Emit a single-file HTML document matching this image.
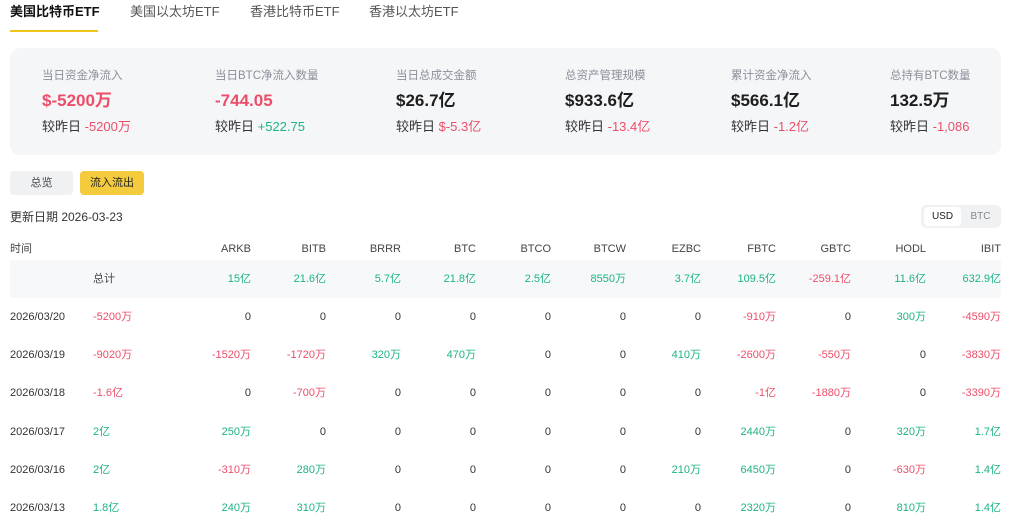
<!DOCTYPE html>
<html><head><meta charset="utf-8"><style>
*{margin:0;padding:0;box-sizing:border-box}
body{width:1015px;height:524px;overflow:hidden;background:#fff;font-family:"Liberation Sans","Noto Sans CJK SC",sans-serif;color:#222;position:relative}
.a{position:absolute;white-space:nowrap}
.tab{top:3px;font-size:13px;line-height:18px;color:#555}
.card{left:10px;top:48px;width:991px;height:107px;background:#f5f6f8;border-radius:10px}
.lab{top:68px;font-size:11.5px;line-height:16px;color:#8a8f98}
.val{top:90px;font-size:17px;line-height:22px;font-weight:bold;color:#1e1e1e}
.sub{top:117px;font-size:13px;line-height:20px;color:#333}
.r{color:#ec4e6a}.g{color:#1db386}
.row{position:absolute;left:10px;width:991px;display:flex;align-items:center;font-size:11px;line-height:16px;color:#333}
.row div{width:75px;text-align:right}
.row .d{width:83px;text-align:left}
.row .t{width:83px;text-align:left}
</style></head><body>
<div class="a tab" style="left:10px;color:#111;font-weight:bold">美国比特币ETF</div>
<div class="a" style="left:10px;top:30px;width:88px;height:2px;background:#f0c419"></div>
<div class="a tab" style="left:130px">美国以太坊ETF</div>
<div class="a tab" style="left:250px">香港比特币ETF</div>
<div class="a tab" style="left:369px">香港以太坊ETF</div>
<div class="a card"></div>
<div class="a lab" style="left:42px">当日资金净流入</div>
<div class="a val r" style="left:42px">$-5200万</div>
<div class="a sub" style="left:42px">较昨日 <span class="r">-5200万</span></div>
<div class="a lab" style="left:215px">当日BTC净流入数量</div>
<div class="a val r" style="left:215px">-744.05</div>
<div class="a sub" style="left:215px">较昨日 <span class="g">+522.75</span></div>
<div class="a lab" style="left:396px">当日总成交金额</div>
<div class="a val" style="left:396px">$26.7亿</div>
<div class="a sub" style="left:396px">较昨日 <span class="r">$-5.3亿</span></div>
<div class="a lab" style="left:565px">总资产管理规模</div>
<div class="a val" style="left:565px">$933.6亿</div>
<div class="a sub" style="left:565px">较昨日 <span class="r">-13.4亿</span></div>
<div class="a lab" style="left:731px">累计资金净流入</div>
<div class="a val" style="left:731px">$566.1亿</div>
<div class="a sub" style="left:731px">较昨日 <span class="r">-1.2亿</span></div>
<div class="a lab" style="left:890px">总持有BTC数量</div>
<div class="a val" style="left:890px">132.5万</div>
<div class="a sub" style="left:890px">较昨日 <span class="r">-1,086</span></div>

<div class="a" style="left:10px;top:171px;width:63px;height:24px;background:#f0f1f3;border-radius:4px;font-size:11px;line-height:24px;text-align:center;color:#444">总览</div>
<div class="a" style="left:80px;top:171px;width:64px;height:24px;background:#f4cb3c;border-radius:4px;font-size:11px;line-height:24px;text-align:center;color:#222">流入流出</div>
<div class="a" style="left:10px;top:208px;font-size:12px;line-height:18px;color:#333">更新日期 2026-03-23</div>
<div class="a" style="left:921px;top:205px;width:80px;height:23px;background:#f0f1f3;border-radius:5px"></div>
<div class="a" style="left:924px;top:207px;width:37px;height:19px;background:#fff;border-radius:4px;font-size:10px;line-height:19px;text-align:center;color:#222">USD</div>
<div class="a" style="left:962px;top:207px;width:37px;height:19px;font-size:10px;line-height:19px;text-align:center;color:#888">BTC</div>

<div class="row" style="top:241px;height:16px;color:#444"><div class="d">时间</div><div class="t"></div><div>ARKB</div><div>BITB</div><div>BRRR</div><div>BTC</div><div>BTCO</div><div>BTCW</div><div>EZBC</div><div>FBTC</div><div>GBTC</div><div>HODL</div><div>IBIT</div></div>
<div class="row" style="top:260px;height:38px;background:#f7f8fa"><div class="d"></div><div class="t" style="color:#444">总计</div><div class="g">15亿</div><div class="g">21.6亿</div><div class="g">5.7亿</div><div class="g">21.8亿</div><div class="g">2.5亿</div><div class="g">8550万</div><div class="g">3.7亿</div><div class="g">109.5亿</div><div class="r">-259.1亿</div><div class="g">11.6亿</div><div class="g">632.9亿</div></div>
<div class="row" style="top:307px;height:20px"><div class="d">2026/03/20</div><div class="t r">-5200万</div><div>0</div><div>0</div><div>0</div><div>0</div><div>0</div><div>0</div><div>0</div><div class="r">-910万</div><div>0</div><div class="g">300万</div><div class="r">-4590万</div></div>
<div class="row" style="top:345px;height:20px"><div class="d">2026/03/19</div><div class="t r">-9020万</div><div class="r">-1520万</div><div class="r">-1720万</div><div class="g">320万</div><div class="g">470万</div><div>0</div><div>0</div><div class="g">410万</div><div class="r">-2600万</div><div class="r">-550万</div><div>0</div><div class="r">-3830万</div></div>
<div class="row" style="top:383px;height:20px"><div class="d">2026/03/18</div><div class="t r">-1.6亿</div><div>0</div><div class="r">-700万</div><div>0</div><div>0</div><div>0</div><div>0</div><div>0</div><div class="r">-1亿</div><div class="r">-1880万</div><div>0</div><div class="r">-3390万</div></div>
<div class="row" style="top:422px;height:20px"><div class="d">2026/03/17</div><div class="t g">2亿</div><div class="g">250万</div><div>0</div><div>0</div><div>0</div><div>0</div><div>0</div><div>0</div><div class="g">2440万</div><div>0</div><div class="g">320万</div><div class="g">1.7亿</div></div>
<div class="row" style="top:460px;height:20px"><div class="d">2026/03/16</div><div class="t g">2亿</div><div class="r">-310万</div><div class="g">280万</div><div>0</div><div>0</div><div>0</div><div>0</div><div class="g">210万</div><div class="g">6450万</div><div>0</div><div class="r">-630万</div><div class="g">1.4亿</div></div>
<div class="row" style="top:498px;height:20px"><div class="d">2026/03/13</div><div class="t g">1.8亿</div><div class="g">240万</div><div class="g">310万</div><div>0</div><div>0</div><div>0</div><div>0</div><div>0</div><div class="g">2320万</div><div>0</div><div class="g">810万</div><div class="g">1.4亿</div></div>
</body></html>
